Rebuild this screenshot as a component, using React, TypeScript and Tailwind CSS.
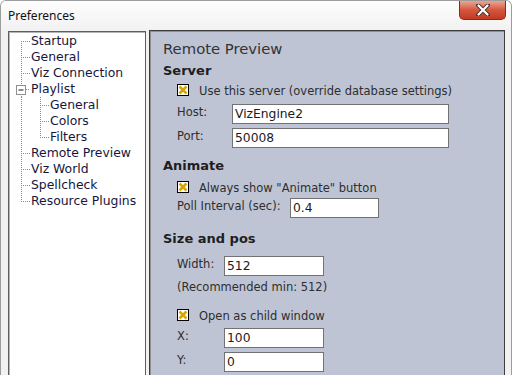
import React from 'react';

const tree = [
  { label: 'Startup', level: 0, kind: 'first' },
  { label: 'General', level: 0, kind: 'mid' },
  { label: 'Viz Connection', level: 0, kind: 'mid' },
  { label: 'Playlist', level: 0, kind: 'open' },
  { label: 'General', level: 1, kind: 'mid' },
  { label: 'Colors', level: 1, kind: 'mid' },
  { label: 'Filters', level: 1, kind: 'last' },
  { label: 'Remote Preview', level: 0, kind: 'mid' },
  { label: 'Viz World', level: 0, kind: 'mid' },
  { label: 'Spellcheck', level: 0, kind: 'mid' },
  { label: 'Resource Plugins', level: 0, kind: 'last' },
];

const dot = { stroke: '#8a8a8a', strokeWidth: 1, strokeDasharray: '1 1' };

const Connector = ({ level, kind }: { level: number; kind: string }) => {
  if (level === 1) {
    return (
      <svg width="41" height="16" className="shrink-0">
        <line x1="12.5" y1="0" x2="12.5" y2="16" {...dot} />
        <line x1="31.5" y1="0" x2="31.5" y2={kind === 'last' ? 9 : 16} {...dot} />
        <line x1="33" y1="8.5" x2="40" y2="8.5" {...dot} />
      </svg>
    );
  }
  if (kind === 'open') {
    return (
      <svg width="22" height="16" className="shrink-0">
        <line x1="12.5" y1="0" x2="12.5" y2="4" {...dot} />
        <line x1="12.5" y1="13" x2="12.5" y2="16" {...dot} />
        <rect x="7.5" y="4.5" width="9" height="9" fill="#fff" stroke="#8f8f8f" />
        <line x1="9.5" y1="9" x2="14.5" y2="9" stroke="#1a1a1a" />
        <line x1="17" y1="8.5" x2="21" y2="8.5" {...dot} />
      </svg>
    );
  }
  return (
    <svg width="22" height="16" className="shrink-0">
      <line
        x1="12.5"
        y1={kind === 'first' ? 8 : 0}
        x2="12.5"
        y2={kind === 'last' ? 9 : 16}
        {...dot}
      />
      <line x1="14" y1="8.5" x2="21" y2="8.5" {...dot} />
    </svg>
  );
};

const Check = () => (
  <svg width="12" height="12" viewBox="0 0 12 12" className="shrink-0">
    <rect x="0.5" y="0.5" width="11" height="11" fill="#fff" stroke="#000" />
    <path d="M3.4 3.4 L8.6 8.6 M8.6 3.4 L3.4 8.6" stroke="#d9a300" strokeWidth="2.6" strokeLinecap="square" />
  </svg>
);

const CheckRow = ({ label, className }: { label: string; className: string }) => (
  <div className={`flex items-center h-[16px] ml-[14px] gap-[10px] ${className}`}>
    <Check />
    <span className="leading-[16px] pt-[1px]">{label}</span>
  </div>
);

const Field = ({
  label,
  value,
  labelW,
  inputW,
  className,
}: {
  label: string;
  value: string;
  labelW: string;
  inputW: string;
  className: string;
}) => (
  <div className={`flex items-start ml-[14px] ${className}`}>
    <span className={`${labelW} leading-[16px]`}>{label}</span>
    <div className={`${inputW} h-[20px] bg-white border border-[#727272] pl-[2px] text-[12.3px] leading-[18px] text-[#1a1a1a]`}>
      {value}
    </div>
  </div>
);

export default function App() {
  return (
    <div className="w-[512px] h-[375px] overflow-hidden flex flex-col bg-[#f2f2f2] border-l border-r border-t border-[#9c9c9c] rounded-t-[6px] font-['DejaVu_Sans',Verdana,sans-serif]">
      {/* Title bar */}
      <div className="h-[29px] shrink-0 flex items-start bg-gradient-to-b from-[#fdfdfd] to-[#f2f2f2]">
        <span className="mt-[7px] ml-[7px] text-[12px] leading-[16px] text-[#111] font-['Noto_Sans',sans-serif]">
          Preferences
        </span>
        <div className="ml-auto mr-[5px] w-[47px] h-[19px] rounded-b-[5px] border border-t-0 border-[#8a2a1c] bg-gradient-to-b from-[#e9a593] via-[#d4553d] to-[#c23a22] flex items-center justify-center">
          <svg width="14" height="12" viewBox="0 0 14 12">
            <path
              d="M2 1 L12 11 M12 1 L2 11"
              stroke="#4a3030"
              strokeWidth="4"
              strokeLinecap="round"
              fill="none"
            />
            <path d="M2.5 1.5 L11.5 10.5 M11.5 1.5 L2.5 10.5" stroke="#fff" strokeWidth="2.2" strokeLinecap="round" />
          </svg>
        </div>
      </div>

      {/* Body */}
      <div className="flex items-start pl-[7px] gap-[3px]">
        {/* Tree */}
        <div className="mt-[1px] w-[138px] h-[360px] shrink-0 bg-white border border-[#5e5e5e] shadow-[inset_1px_1px_0_#b5b5b5] text-[12.4px] text-[#16163c]">
          <div className="flex flex-col pt-[1px]">
            {tree.map((item, i) => (
              <div key={i} className="flex items-center h-[16px]">
                <Connector level={item.level} kind={item.kind} />
                <span className="leading-[16px] whitespace-nowrap">{item.label}</span>
              </div>
            ))}
          </div>
        </div>

        {/* Settings panel */}
        <div className="w-[356px] h-[360px] shrink-0 bg-[#bec4d4] border border-[#3e3e3e] shadow-[inset_1px_1px_0_#8e8e8e] text-[11.5px] text-[#2e2e2e]">
          <div className="flex flex-col pl-[13px] pt-[9px]">
            <div className="h-[18px] leading-[18px] text-[14.8px] text-[#333]">Remote Preview</div>
            <div className="mt-[5px] h-[16px] leading-[16px] text-[13px] font-bold text-[#1e1e1e]">Server</div>
            <CheckRow className="mt-[3px]" label="Use this server (override database settings)" />
            <Field className="mt-[6px]" label="Host:" value="VizEngine2" labelW="w-[55px]" inputW="w-[217px]" />
            <Field className="mt-[4px]" label="Port:" value="50008" labelW="w-[55px]" inputW="w-[217px]" />

            <div className="mt-[10px] h-[16px] leading-[16px] text-[13px] font-bold text-[#1e1e1e]">Animate</div>
            <CheckRow className="mt-[5px]" label={'Always show "Animate" button'} />
            <Field className="mt-[3px]" label="Poll Interval (sec):" value="0.4" labelW="w-[113px]" inputW="w-[89px]" />

            <div className="mt-[13px] h-[16px] leading-[16px] text-[13px] font-bold text-[#1e1e1e]">Size and pos</div>
            <Field className="mt-[9px]" label="Width:" value="512" labelW="w-[47px]" inputW="w-[100px]" />
            <div className="mt-[3px] ml-[14px] h-[16px] leading-[16px]">(Recommended min: 512)</div>
            <CheckRow className="mt-[12px]" label="Open as child window" />
            <Field className="mt-[5px]" label="X:" value="100" labelW="w-[47px]" inputW="w-[100px]" />
            <Field className="mt-[4px]" label="Y:" value="0" labelW="w-[47px]" inputW="w-[100px]" />
          </div>
        </div>
      </div>
    </div>
  );
}
